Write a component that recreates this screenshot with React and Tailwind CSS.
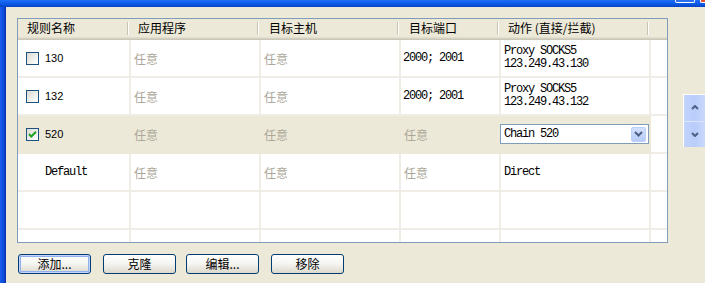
import React from "react";

const CJK = "font-['Noto_Sans_CJK_SC',sans-serif]";
const MONO = "font-['Liberation_Mono',monospace] text-[12px] tracking-[-1.2px] leading-[12px]";
const MONO2 = "font-['Liberation_Mono',monospace] text-[12px] tracking-[-1.2px] leading-[13px]";
const SANS = "font-['Liberation_Sans',sans-serif] text-[11px]";

function CheckBox({ checked }) {
  return (
    <div className="w-[13px] h-[13px] border border-[#1c5180] bg-gradient-to-br from-[#dcdcd4] to-[#ffffff] flex items-center justify-center shrink-0">
      {checked && (
        <svg width="11" height="11" viewBox="0 0 11 11">
          <path d="M2 5 L4.3 7.5 L9 2.8" stroke="#21a121" strokeWidth="2" fill="none" />
        </svg>
      )}
    </div>
  );
}

function Gray() {
  return <span className={`${CJK} text-[12px] text-[#aca899] leading-[12px]`}>任意</span>;
}

function HeaderCell({ children, pl, sep = true }) {
  return (
    <div className="flex items-center h-[18px]">
      <div className={`${CJK} text-[12px] text-black leading-[12px] ${pl} whitespace-nowrap`}>{children}</div>
      <div className="flex-1" />
      {sep && <div className="w-[2px] h-[13px] mr-[2px] border-l border-[#c7c4b3] bg-white" />}
    </div>
  );
}

function Row({ sel, children }) {
  const cell = sel
    ? "bg-[#ece9d8] border-[#ece9d8]"
    : "bg-white border-[#efede6]";
  const kids = React.Children.toArray(children);
  return (
    <div className="grid grid-cols-[113px_130px_140px_100px_150px_16px] h-[38px] shrink-0">
      {kids.map((k, i) => (
        <div key={i} className={`border-r-2 border-b-2 flex items-center ${cell}`}>{k}</div>
      ))}
      <div className="border-b-2 border-[#efede6] bg-white" />
    </div>
  );
}

function XPButton({ children, def, ml }) {
  return (
    <div
      className={`${ml} w-[73px] h-[20px] rounded-[3px] border border-[#003c74] bg-gradient-to-b from-[#ffffff] via-[#f4f4f0] to-[#dcd8cc] flex items-center justify-center ${
        def ? "shadow-[inset_0_0_0_1px_#c5d5fa,inset_0_0_0_2px_#8fb0ef]" : ""
      }`}
    >
      <span className={`${CJK} text-[12px] leading-[12px] text-black`}>{children}</span>
    </div>
  );
}

export default function App() {
  return (
    <div className="w-[705px] h-[283px] bg-[#ece9d8] flex flex-col overflow-hidden">
      <div className="h-[7px] shrink-0 flex justify-end items-start bg-gradient-to-b from-[#1d6ef5] via-[#0c5be9] to-[#0842c6]">
        <div className="w-[20px] h-[3px] mr-[5px] bg-[#2a6ff2] border-x border-b border-white rounded-b-[2px]" />
        <div className="w-[5px] h-[3px] bg-[#df5330] border-l border-b border-white rounded-bl-[2px]" />
      </div>
      <div className="flex flex-1">
        <div className="w-[6px] shrink-0 bg-gradient-to-r from-[#1a5ff0] to-[#0a3fd0] border-r border-[#0733a8]" />
        <div className="flex-1 flex flex-col pl-[11px] pt-[11px]">
          <div className="flex">
            <div className="w-[651px] h-[225px] border border-[#7f9db9] bg-white overflow-hidden flex flex-col">
              <div className="shrink-0 bg-[#ece9d8]">
                <div className="grid grid-cols-[113px_130px_140px_100px_150px_16px]">
                  <HeaderCell pl="pl-[9px]">规则名称</HeaderCell>
                  <HeaderCell pl="pl-[7px]">应用程序</HeaderCell>
                  <HeaderCell pl="pl-[8px]">目标主机</HeaderCell>
                  <HeaderCell pl="pl-[8px]">目标端口</HeaderCell>
                  <HeaderCell pl="pl-[7px]">动作 (直接/拦截)</HeaderCell>
                  <div />
                </div>
                <div className="h-px bg-[#e2decd]" />
                <div className="h-px bg-[#d6d2c2]" />
                <div className="h-px bg-[#cbc7b8]" />
              </div>

              <Row>
                <div className="flex items-center pl-[8px] gap-[6px]">
                  <CheckBox />
                  <span className={`${SANS} text-black`}>130</span>
                </div>
                <div className="pl-[3px]"><Gray /></div>
                <div className="pl-[3px]"><Gray /></div>
                <div className={`pl-[2px] ${MONO} text-black`}>2000; 2001</div>
                <div className={`pl-[3px] ${MONO2} text-black flex flex-col`}>
                  <div>Proxy SOCKS5</div>
                  <div>123.249.43.130</div>
                </div>
              </Row>

              <Row>
                <div className="flex items-center pl-[8px] gap-[6px]">
                  <CheckBox />
                  <span className={`${SANS} text-black`}>132</span>
                </div>
                <div className="pl-[3px]"><Gray /></div>
                <div className="pl-[3px]"><Gray /></div>
                <div className={`pl-[2px] ${MONO} text-black`}>2000; 2001</div>
                <div className={`pl-[3px] ${MONO2} text-black flex flex-col`}>
                  <div>Proxy SOCKS5</div>
                  <div>123.249.43.132</div>
                </div>
              </Row>

              <Row sel>
                <div className="flex items-center pl-[8px] gap-[6px]">
                  <CheckBox checked />
                  <span className={`${SANS} text-black`}>520</span>
                </div>
                <div className="pl-[3px]"><Gray /></div>
                <div className="pl-[3px]"><Gray /></div>
                <div className="pl-[3px]"><Gray /></div>
                <div className="ml-[-1px] w-[149px] h-[20px] border border-[#7f9db9] bg-white flex items-center pl-[3px] pr-[2px]">
                  <span className={`${MONO} text-black flex-1`}>Chain 520</span>
                  <div className="w-[15px] h-[15px] rounded-[2px] bg-gradient-to-b from-[#d3e0fd] to-[#b6cbf8] border border-[#bcd0fa] flex items-center justify-center">
                    <svg width="9" height="6" viewBox="0 0 9 6">
                      <path d="M1 1 L4.5 4.5 L8 1" stroke="#4d6185" strokeWidth="2" fill="none" />
                    </svg>
                  </div>
                </div>
              </Row>

              <Row>
                <div className={`pl-[27px] ${MONO} text-black`}>Default</div>
                <div className="pl-[3px]"><Gray /></div>
                <div className="pl-[3px]"><Gray /></div>
                <div className="pl-[3px]"><Gray /></div>
                <div className={`pl-[3px] ${MONO} text-black`}>Direct</div>
              </Row>

              <Row>
                <div />
                <div />
                <div />
                <div />
                <div />
              </Row>
              <Row>
                <div />
                <div />
                <div />
                <div />
                <div />
              </Row>
            </div>

            <div className="ml-[15px] mt-[76px] w-[22px] h-[53px] flex flex-col border-l border-t border-white">
              <div className="flex-1 bg-gradient-to-r from-[#c3d4fc] via-[#b9cdfb] to-[#c9d8fc] flex items-center justify-center border-b border-[#dbe5fd]">
                <svg width="8" height="5" viewBox="0 0 8 5">
                  <path d="M1 4 L4 1 L7 4" stroke="#4d6185" strokeWidth="2" fill="none" />
                </svg>
              </div>
              <div className="flex-1 bg-gradient-to-r from-[#c3d4fc] via-[#b9cdfb] to-[#c9d8fc] flex items-center justify-center">
                <svg width="8" height="5" viewBox="0 0 8 5">
                  <path d="M1 1 L4 4 L7 1" stroke="#4d6185" strokeWidth="2" fill="none" />
                </svg>
              </div>
            </div>
          </div>

          <div className="flex mt-[11px]">
            <XPButton def ml="ml-[1px]">添加...</XPButton>
            <XPButton ml="ml-[12px]">克隆</XPButton>
            <XPButton ml="ml-[10px]">编辑...</XPButton>
            <XPButton ml="ml-[12px]">移除</XPButton>
          </div>
        </div>
      </div>
    </div>
  );
}
